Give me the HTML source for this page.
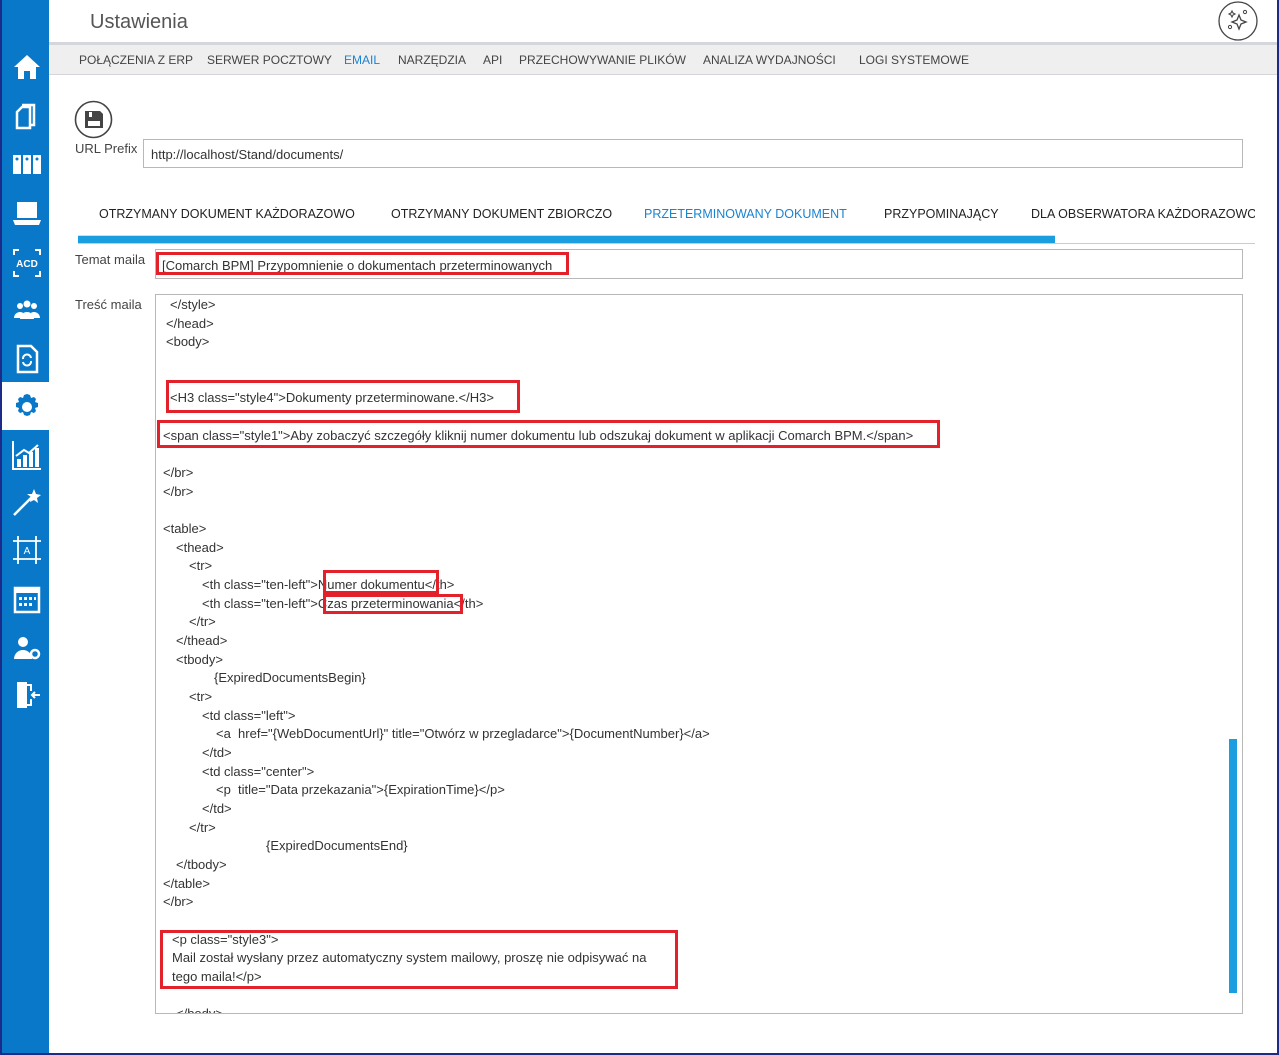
<!DOCTYPE html>
<html><head><meta charset="utf-8">
<style>
*{margin:0;padding:0;box-sizing:border-box}
body{width:1279px;height:1055px;position:relative;background:#fff;font-family:"Liberation Sans",sans-serif;overflow:hidden;color:#333}
.a{position:absolute;white-space:nowrap}
#sb{position:absolute;left:0;top:0;width:49px;height:1055px;background:#0a78c9;border-left:2px solid #1c2a8a}
.ic{position:absolute;left:10px;width:30px;height:30px}
.nav{font-size:12px;color:#444;top:53px}
.tab{font-size:12.5px;color:#222;top:207px}
.box{position:absolute;border:1px solid #b8b8b8;background:#fff}
.c{position:absolute;font-size:13px;color:#333;white-space:nowrap;line-height:16px}
.r{position:absolute;border:3px solid #e3212a}
</style></head><body>
<div id="sb">
<svg class="ic" style="top:52px" viewBox="0 0 30 30"><path d="M2 15 L15 3 L28 15 L24 15 L24 27 L18 27 L18 19 L12 19 L12 27 L6 27 L6 15Z" fill="#fff"/></svg>
<svg class="ic" style="top:101px" viewBox="0 0 30 30"><path d="M10 4h12v20h-3" fill="none" stroke="#fff" stroke-width="2.5"/><path d="M5 11l5-5h8v21H5z" fill="none" stroke="#fff" stroke-width="2.5"/></svg>
<svg class="ic" style="top:149px" viewBox="0 0 30 30"><rect x="1" y="6" width="8" height="19" fill="#fff"/><rect x="11" y="6" width="8" height="19" fill="#fff"/><rect x="21" y="6" width="8" height="19" fill="#fff"/><circle cx="5" cy="10" r="1.5" fill="#0a78c9"/><circle cx="15" cy="10" r="1.5" fill="#0a78c9"/><circle cx="25" cy="10" r="1.5" fill="#0a78c9"/></svg>
<svg class="ic" style="top:199px" viewBox="0 0 30 30"><rect x="5" y="3" width="20" height="16" fill="#fff"/><path d="M1 21h28l-2 5H3z" fill="#fff"/></svg>
<svg class="ic" style="top:248px" viewBox="0 0 30 30"><path d="M2 7V2h5M23 2h5v5M2 23v5h5M23 28h5v-5" fill="none" stroke="#fff" stroke-width="2"/><text x="15" y="19" font-size="10" font-weight="bold" fill="#fff" text-anchor="middle" font-family="Liberation Sans">ACD</text></svg>
<svg class="ic" style="top:297px" viewBox="0 0 30 30"><circle cx="8" cy="9" r="3" fill="#fff"/><circle cx="15" cy="7" r="3.5" fill="#fff"/><circle cx="22" cy="9" r="3" fill="#fff"/><path d="M2 21a6 6 0 0 1 12 0zM8 22a7 7 0 0 1 14 0zM16 21a6 6 0 0 1 12 0z" fill="#fff"/></svg>
<svg class="ic" style="top:344px" viewBox="0 0 30 30"><path d="M6 2h13l6 6v20H6z" fill="none" stroke="#fff" stroke-width="2.5"/><path d="M11 15a4 4 0 0 1 8-1M19 17a4 4 0 0 1-8 1" stroke="#fff" stroke-width="2" fill="none"/></svg>
<div style="position:absolute;left:0;top:382px;width:49px;height:48px;background:#fff"></div>
<svg class="ic" style="top:392px" viewBox="0 0 30 30"><path d="M15 2l3 1 1 3 3-1 2 2-1 3 3 1v4l-3 1 1 3-2 2-3-1-1 3-3 1-3-1-1-3-3 1-2-2 1-3-3-1v-4l3-1-1-3 2-2 3 1 1-3z" fill="#0a78c9"/><circle cx="15" cy="15" r="5" fill="#fff"/></svg>
<svg class="ic" style="top:440px" viewBox="0 0 30 30"><path d="M1 1v28h28" fill="none" stroke="#fff" stroke-width="2"/><rect x="5" y="19" width="4" height="8" fill="#fff"/><rect x="11" y="15" width="4" height="12" fill="#fff"/><rect x="17" y="12" width="4" height="15" fill="#fff"/><rect x="23" y="8" width="4" height="19" fill="#fff"/><path d="M4 16l8-6 5 3 9-8" stroke="#fff" stroke-width="2" fill="none"/></svg>
<svg class="ic" style="top:487px" viewBox="0 0 30 30"><path d="M2 28L20 10" stroke="#fff" stroke-width="2.5"/><path d="M22 2l2 5 5 1-4 3 1 5-4-3-4 2 1-5-4-3 5 0z" fill="#fff"/></svg>
<svg class="ic" style="top:535px" viewBox="0 0 30 30"><path d="M6 1v28M24 1v28M1 6h28M1 24h28" stroke="#fff" stroke-width="1.8"/><text x="15" y="19" font-size="10" fill="#fff" text-anchor="middle" font-family="Liberation Sans">A</text></svg>
<svg class="ic" style="top:585px" viewBox="0 0 30 30"><rect x="3" y="3" width="24" height="24" fill="none" stroke="#fff" stroke-width="2.5"/><rect x="3" y="3" width="24" height="5" fill="#fff"/><g fill="#fff"><rect x="7" y="12" width="3" height="3"/><rect x="12" y="12" width="3" height="3"/><rect x="17" y="12" width="3" height="3"/><rect x="22" y="12" width="2" height="3"/><rect x="7" y="18" width="3" height="3"/><rect x="12" y="18" width="3" height="3"/><rect x="17" y="18" width="3" height="3"/></g></svg>
<svg class="ic" style="top:633px" viewBox="0 0 30 30"><circle cx="11" cy="9" r="5" fill="#fff"/><path d="M2 26a9 9 0 0 1 18 0z" fill="#fff"/><circle cx="23" cy="21" r="4" fill="none" stroke="#fff" stroke-width="2.5"/></svg>
<svg class="ic" style="top:680px" viewBox="0 0 30 30"><path d="M5 2h10v26H5z" fill="#fff"/><path d="M15 5h4v6M19 19v6h-4" stroke="#fff" stroke-width="2" fill="none"/><path d="M28 15h-8M23 12l-3 3 3 3" stroke="#fff" stroke-width="2" fill="none"/></svg>
</div>
<div style="position:absolute;right:0;top:0;width:2px;height:1055px;background:#1c2a8a"></div>
<div style="position:absolute;left:0;bottom:0;width:1279px;height:2px;background:#1c2a8a"></div>

<div class="a" style="left:90px;top:11px;font-size:20px;color:#555">Ustawienia</div>
<svg style="position:absolute;left:1217px;top:1px" width="42" height="40" viewBox="0 0 42 40"><circle cx="21" cy="20" r="19" fill="#fff" stroke="#444" stroke-width="1.3"/><path d="M22 14l2 5 5 2-5 2-2 5-2-5-5-2 5-2z" fill="none" stroke="#444" stroke-width="1.3"/><path d="M15 10l1 2 2 1-2 1-1 2-1-2-2-1 2-1z" fill="none" stroke="#444" stroke-width="1.1"/><circle cx="28" cy="11" r="1.6" fill="none" stroke="#444"/><circle cx="13" cy="26" r="1.6" fill="none" stroke="#444"/></svg>

<div style="position:absolute;left:49px;top:42px;width:1228px;height:33px;background:#efefef;border-top:3px solid #d5d5dc;border-bottom:1px solid #d5d5dc"></div>
<div class="a nav" style="left:79px">POŁĄCZENIA Z ERP</div>
<div class="a nav" style="left:207px">SERWER POCZTOWY</div>
<div class="a nav" style="left:344px;color:#1a83d0">EMAIL</div>
<div class="a nav" style="left:398px">NARZĘDZIA</div>
<div class="a nav" style="left:483px">API</div>
<div class="a nav" style="left:519px">PRZECHOWYWANIE PLIKÓW</div>
<div class="a nav" style="left:703px">ANALIZA WYDAJNOŚCI</div>
<div class="a nav" style="left:859px">LOGI SYSTEMOWE</div>

<svg style="position:absolute;left:74px;top:100px" width="40" height="40" viewBox="0 0 40 40"><circle cx="19.5" cy="19.5" r="18" fill="#fff" stroke="#444" stroke-width="1.6"/><path d="M11 11h15l3 3v14H11z" fill="#444"/><rect x="14" y="21" width="12" height="5" fill="#fff"/><rect x="15" y="12" width="3" height="5" fill="#fff"/></svg>
<div class="a" style="left:75px;top:141px;font-size:13px;color:#444">URL Prefix</div>
<div class="box" style="left:143px;top:139px;width:1100px;height:29px"></div>
<div class="a" style="left:151px;top:147px;font-size:13px;color:#333">http://localhost/Stand/documents/</div>

<div class="a tab" style="left:99px">OTRZYMANY DOKUMENT KAŻDORAZOWO</div>
<div class="a tab" style="left:391px">OTRZYMANY DOKUMENT ZBIORCZO</div>
<div class="a tab" style="left:644px;color:#1a83d0">PRZETERMINOWANY DOKUMENT</div>
<div class="a tab" style="left:884px">PRZYPOMINAJĄCY</div>
<div class="a tab" style="left:1031px;width:224px;overflow:hidden">DLA OBSERWATORA KAŻDORAZOWO</div>
<div style="position:absolute;left:78px;top:235px;width:977px;height:8px;background:#1a9ee0;border-top:1px solid #bfe3f6"></div>
<div style="position:absolute;left:78px;top:243px;width:1177px;height:1px;background:#ccc"></div>

<div class="a" style="left:75px;top:252px;font-size:13px;color:#444">Temat maila</div>
<div class="box" style="left:155px;top:249px;width:1088px;height:30px"></div>
<div class="a" style="left:162px;top:258px;font-size:13px;color:#333">[Comarch BPM] Przypomnienie o dokumentach przeterminowanych</div>
<div class="r" style="left:156px;top:252px;width:413px;height:23px"></div>

<div class="a" style="left:75px;top:297px;font-size:13px;color:#444">Treść maila</div>
<div class="box" style="left:155px;top:294px;width:1088px;height:720px;overflow:hidden">
<div style="position:absolute;left:1073px;top:444px;width:8px;height:254px;background:#1a9ee0"></div>
</div>
<div style="position:absolute;left:156px;top:295px;width:1070px;height:718px;overflow:hidden">
<div class="c" style="left:14px;top:2px">&lt;/style&gt;</div>
<div class="c" style="left:10px;top:21px">&lt;/head&gt;</div>
<div class="c" style="left:10px;top:39px">&lt;body&gt;</div>
<div class="c" style="left:14px;top:95px">&lt;H3 class="style4"&gt;Dokumenty przeterminowane.&lt;/H3&gt;</div>
<div class="c" style="left:7px;top:133px">&lt;span class="style1"&gt;Aby zobaczyć szczegóły kliknij numer dokumentu lub odszukaj dokument w aplikacji Comarch BPM.&lt;/span&gt;</div>
<div class="c" style="left:7px;top:170px">&lt;/br&gt;</div>
<div class="c" style="left:7px;top:189px">&lt;/br&gt;</div>
<div class="c" style="left:7px;top:226px">&lt;table&gt;</div>
<div class="c" style="left:20px;top:245px">&lt;thead&gt;</div>
<div class="c" style="left:33px;top:263px">&lt;tr&gt;</div>
<div class="c" style="left:46px;top:282px">&lt;th class="ten-left"&gt;Numer dokumentu&lt;/th&gt;</div>
<div class="c" style="left:46px;top:301px">&lt;th class="ten-left"&gt;Czas przeterminowania&lt;/th&gt;</div>
<div class="c" style="left:33px;top:319px">&lt;/tr&gt;</div>
<div class="c" style="left:20px;top:338px">&lt;/thead&gt;</div>
<div class="c" style="left:20px;top:357px">&lt;tbody&gt;</div>
<div class="c" style="left:58px;top:375px">{ExpiredDocumentsBegin}</div>
<div class="c" style="left:33px;top:394px">&lt;tr&gt;</div>
<div class="c" style="left:46px;top:413px">&lt;td class="left"&gt;</div>
<div class="c" style="left:60px;top:431px">&lt;a &nbsp;href="{WebDocumentUrl}" title="Otwórz w przegladarce"&gt;{DocumentNumber}&lt;/a&gt;</div>
<div class="c" style="left:46px;top:450px">&lt;/td&gt;</div>
<div class="c" style="left:46px;top:469px">&lt;td class="center"&gt;</div>
<div class="c" style="left:60px;top:487px">&lt;p &nbsp;title="Data przekazania"&gt;{ExpirationTime}&lt;/p&gt;</div>
<div class="c" style="left:46px;top:506px">&lt;/td&gt;</div>
<div class="c" style="left:33px;top:525px">&lt;/tr&gt;</div>
<div class="c" style="left:110px;top:543px">{ExpiredDocumentsEnd}</div>
<div class="c" style="left:20px;top:562px">&lt;/tbody&gt;</div>
<div class="c" style="left:7px;top:581px">&lt;/table&gt;</div>
<div class="c" style="left:7px;top:599px">&lt;/br&gt;</div>
<div class="c" style="left:16px;top:637px">&lt;p class="style3"&gt;</div>
<div class="c" style="left:16px;top:655px">Mail został wysłany przez automatyczny system mailowy, proszę nie odpisywać na</div>
<div class="c" style="left:16px;top:674px">tego maila!&lt;/p&gt;</div>
<div class="c" style="left:20px;top:711px">&lt;/body&gt;</div>
</div>
<div class="r" style="left:166px;top:380px;width:354px;height:33px"></div>
<div class="r" style="left:157px;top:420px;width:783px;height:28px"></div>
<div class="r" style="left:323px;top:570px;width:116px;height:24px"></div>
<div class="r" style="left:323px;top:594px;width:140px;height:20px"></div>
<div class="r" style="left:160px;top:930px;width:518px;height:59px"></div>
</body></html>
